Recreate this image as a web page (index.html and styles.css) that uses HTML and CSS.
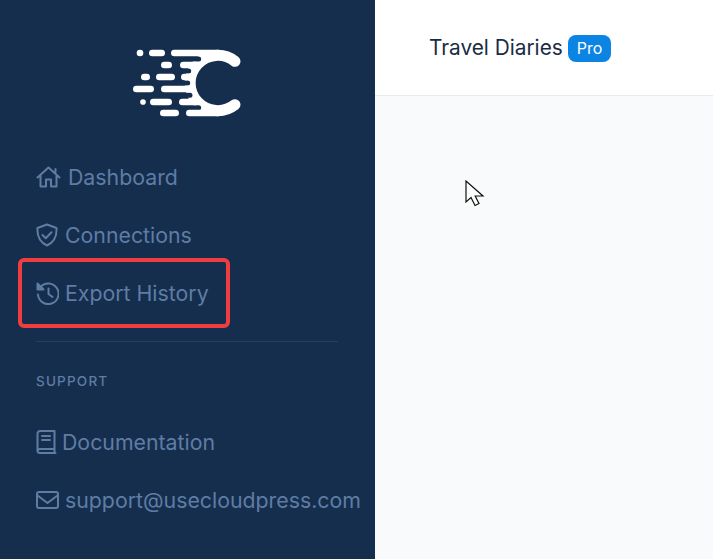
FILE: index.html
```html
<!DOCTYPE html>
<html lang="en">
<head>
    <meta charset="UTF-8">
    <meta name="viewport" content="width=device-width, initial-scale=1.0">
    <title>Travel Diaries</title>
    <link rel="stylesheet" href="styles.css">
</head>
<body>
    <div class="app">
        <aside class="sidebar">
            <div class="logo">
                <svg width="135" height="90" viewBox="0 0 405 270" fill="none" stroke="#fff" stroke-linecap="round">
                    <!-- the C, with notches cut by bars of the sidebar colour -->
                    <path d="M345 79A83 83 0 1 0 345 209" stroke-width="33"/>
                    <path class="logo-cut" d="M150 72H236M150 108H206M150 144H203M150 181H210M150 218H236" stroke-width="15"/>
                    <circle cx="60" cy="54" r="10" fill="#fff" stroke="none"/>
                    <circle cx="69" cy="201" r="8.5" fill="#fff" stroke="none"/>
                    <path d="M97 54H125M133 90H146M73 126H80M118 126H155M49 162H92M100 201H146M130 234H167" stroke-width="20"/>
                    <path d="M163 54H294M190 90H228M193 126H215M133 162H215M187 201H228M208 234H294" stroke-width="20"/>
                </svg>
            </div>
            <nav class="nav">
                <a class="nav-item nav-dashboard">
                    <svg class="icon" width="25" height="22" viewBox="0 0 25 22"><path d="M1.5 11.5 12.5 1.5l11 10M4.500 9v11.5H10v-7h5v7h5.500V9M19.500 6V3"/></svg>
                    Dashboard
                </a>
                <a class="nav-item nav-wide">
                    <svg class="icon" width="22" height="24" viewBox="0 0 22 24"><path d="M11 1.5 20.5 5c.5 8-1.5 14-9.500 17.500C3 19 1 13 1.500 5zM6.500 12l3.200 3.200 5.800-6"/></svg>
                    Connections
                </a>
                <a class="nav-item">
                    <svg class="icon" width="23" height="24" viewBox="0 0 23 24">
                        <path d="M4.500 6A10.300 10.300 0 1 1 2 13.500M12.500 7.500V13l4 3"/>
                        <path class="icon-solid" d="M1.500 2.500v6h6z"/>
                    </svg>
                    Export History
                </a>
            </nav>
            <hr class="divider">
            <div class="section-title">SUPPORT</div>
            <nav class="nav">
                <a class="nav-item nav-docs">
                    <svg class="icon" width="21" height="24" viewBox="0 0 21 24"><path d="M4 1h14.500v18H4a2.500 2.500 0 0 0-2.500 2.500v-18A2.500 2.500 0 0 1 4 1zM1.500 20.500A2.500 2.500 0 0 0 4 23h15.500M18.500 19v4M6 6h8M6 10h8"/></svg>
                    Documentation
                </a>
                <a class="nav-item">
                    <svg class="icon" width="23" height="18" viewBox="0 0 23 18"><rect x="1" y="1" width="21" height="16" rx="2"/><path d="M1.500 4.500 11.500 12l10-7.500"/></svg>
                    support@usecloudpress.com
                </a>
            </nav>
            <div class="callout"></div>
        </aside>
        <div class="content">
            <header class="topbar">
                <span class="project">Travel Diaries</span>
                <span class="badge">Pro</span>
            </header>
            <main class="main">
                <svg class="cursor" width="20" height="28" viewBox="0 0 20 28"><path d="M1 1v21l5-4.500 4 8 4-2-3.800-7.500H18z"/></svg>
            </main>
        </div>
    </div>
</body>
</html>
```

FILE: styles.css
```css
html, body { margin: 0; height: 100%; overflow: hidden; }
body { font-family: "Inter", "Liberation Sans", sans-serif; background-color: #fff; color: #1a2b45; }
.app { display: flex; height: 559px; }

.sidebar { position: relative; box-sizing: border-box; width: 375px; flex: none; padding: 0 0 0 36px; background-color: #152e4e; }
.logo { height: 148px; margin-left: -36px; padding: 35px 0 0 120px; box-sizing: border-box; }
.logo svg { display: block; }
.logo-cut { stroke: #152e4e; stroke-linecap: round; }
.nav { display: flex; flex-direction: column; }
.nav-item { display: flex; align-items: center; gap: 6px; height: 58px; font-size: 21.3px; color: #5f7ca4; white-space: nowrap; }
.nav-dashboard, .nav-wide { gap: 7px; }
.nav-docs { gap: 5px; }
.icon { flex: none; fill: none; stroke: #5f7ca4; stroke-width: 2; stroke-linecap: round; stroke-linejoin: round; }
.icon-solid { fill: #5f7ca4; }
.divider { width: 302px; height: 1px; margin: 19px 0 0; border: 0; background-color: #233f63; }
.section-title { height: 71px; padding-top: 31px; box-sizing: border-box; font-size: 13.5px; line-height: 16px; font-weight: 500; letter-spacing: 1.2px; color: #5f7ca4; }
.callout { position: absolute; left: 18px; top: 258px; width: 204px; height: 62px; border: 4px solid #f03e3e; border-radius: 6px; }

.content { flex: 1; display: flex; flex-direction: column; min-width: 0; }
.topbar { display: flex; align-items: center; gap: 5px; height: 95px; padding-left: 54px; border-bottom: 1px solid #e8ebf1; background-color: #fff; }
.project { font-size: 20.8px; color: #1a2b45; }
.badge { margin-top: 2px; padding: 3px 9px; border-radius: 8px; font-size: 16px; line-height: 21px; color: #fff; background-color: #0b84e3; }
.main { position: relative; flex: 1; background-color: #f9fafc; }
.cursor { position: absolute; left: 90px; top: 84px; fill: #fff; stroke: #111; stroke-width: 1.2; }
```
